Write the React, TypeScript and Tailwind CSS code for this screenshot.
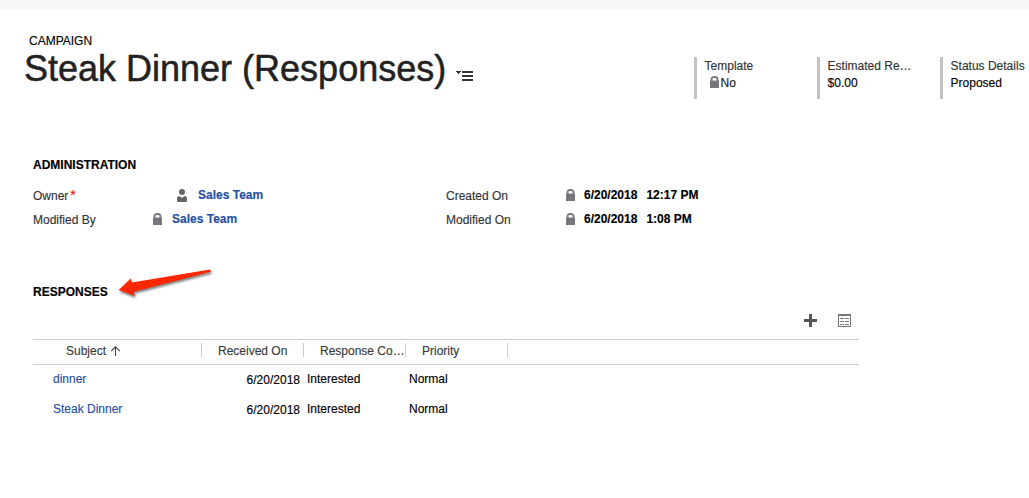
import React from 'react';

function Lock({ className = '' }: { className?: string }) {
  return (
    <svg viewBox="0 0 9 12" className={`block h-3 w-[9px] shrink-0 ${className}`}>
      <path d="M1.6 5.5V3C1.6 1.6 2.4 1 4.5 1s2.9.6 2.9 2v2.5" fill="none" stroke="#77787b" strokeWidth="1.9" />
      <rect y="4.6" width="9" height="7.4" fill="#77787b" />
    </svg>
  );
}

function Person() {
  return (
    <svg viewBox="0 0 10 13" className="mt-px block h-[13px] w-[10px] shrink-0" fill="#666">
      <circle cx="5" cy="3" r="3" />
      <path d="M0 11.5V9.5C0 8 1 7.2 2.4 7L5 8.8 7.6 7C9 7.2 10 8 10 9.5v2C10 12.5 9.3 13 8.4 13H1.6C.7 13 0 12.5 0 11.5Z" />
    </svg>
  );
}

function HeaderField({ label, children }: { label: string; children: React.ReactNode }) {
  return (
    <div className="h-[42px] w-[123px] shrink-0 border-l-[3px] border-[#c3c3c3] pl-[7.6px] pt-[2px]">
      <div className="whitespace-nowrap text-[#333] leading-[14px]">{label}</div>
      <div className="mt-[3px] flex leading-[14px]">{children}</div>
    </div>
  );
}

function HeadCell({ children, className }: { children: React.ReactNode; className: string }) {
  return (
    <div className={`flex h-[14px] shrink-0 whitespace-nowrap border-r border-[#ccc] leading-[16px] text-[#3a3a3a] ${className}`}>
      {children}
    </div>
  );
}

const rows = ['dinner', 'Steak Dinner'];

export default function App() {
  return (
    <div className="h-[498px] w-[1029px] overflow-hidden bg-white text-[12px] leading-[14px] text-black [-webkit-text-stroke-width:0.15px] [font-family:'Liberation_Sans',Arial,sans-serif]">
      <div className="h-[9px] bg-[#f6f6f6]" />
      <header className="flex h-[149px]">
        <div className="w-[694px] shrink-0 pt-[25px]">
          <div className="pl-[29px]">CAMPAIGN</div>
          <div className="flex pl-6">
            <h1 className="whitespace-nowrap text-[36px] leading-[42px] text-[#222] [-webkit-text-stroke-width:0.5px]">Steak Dinner (Responses)</h1>
            <svg viewBox="0 0 17 10" className="ml-[10px] mt-[23px] block h-[10px] w-[17px]" fill="#333" shapeRendering="crispEdges">
              <path d="M0 0h5v1H4v1H3v1H2V2H1V1H0Z" />
              <path d="M6 0h11v2H6zM6 4h11v2H6zM6 8h11v2H6z" />
            </svg>
          </div>
        </div>
        <div className="flex pt-12">
          <HeaderField label="Template">
            <Lock className="ml-[5.4px] mr-[1.6px]" />
            <span className="text-[#222]">No</span>
          </HeaderField>
          <HeaderField label="Estimated Re…">$0.00</HeaderField>
          <HeaderField label="Status Details">Proposed</HeaderField>
        </div>
      </header>

      <section className="h-[127px] pl-[33px]">
        <h2 className="font-bold">ADMINISTRATION</h2>
        <div className="mt-4 flex h-6">
          <div className="w-[144px] pt-px text-[#333]">
            Owner<span className="ml-[2px] text-[14px] leading-[12px] text-[#e02020]">*</span>
          </div>
          <div className="flex w-[269px] font-bold text-[#1f50a5]">
            <Person />
            <span className="ml-[11px]">Sales Team</span>
          </div>
          <div className="w-[120px] pt-px text-[#333]">Created On</div>
          <Lock className="mt-px" />
          <span className="ml-[9px] font-bold">6/20/2018</span>
          <span className="ml-[9px] font-bold">12:17 PM</span>
        </div>
        <div className="flex h-6">
          <div className="w-[120px] pt-px text-[#333]">Modified By</div>
          <div className="flex w-[293px] font-bold text-[#1f50a5]">
            <Lock className="mt-px" />
            <span className="ml-[10px]">Sales Team</span>
          </div>
          <div className="w-[120px] pt-px text-[#333]">Modified On</div>
          <Lock className="mt-px" />
          <span className="ml-[9px] font-bold">6/20/2018</span>
          <span className="ml-[9px] font-bold">1:08 PM</span>
        </div>
      </section>

      <section className="pl-[33px]">
        <div className="relative h-[29px]">
          <h2 className="font-bold">RESPONSES</h2>
          <svg viewBox="0 0 100 34" className="absolute left-[83px] top-[-18px] h-[34px] w-[100px] overflow-visible drop-shadow-[1px_2px_1px_rgba(0,0,0,0.5)]">
            <path d="M2.7 23 14.7 11.5 15.8 15.5 94 2.6 95 4.8 17.5 24.8 18.7 29Z" fill="#ff2600" />
          </svg>
        </div>
        <div className="flex h-[25px] w-[826px] justify-end pr-2">
          <svg viewBox="0 0 13 13" className="mr-[21px] block h-[13px] w-[13px]" fill="#555" shapeRendering="crispEdges">
            <path d="M5 0h3v5h5v3H8v5H5V8H0V5h5Z" />
          </svg>
          <svg viewBox="0 0 13 13" className="block h-[13px] w-[13px]" fill="#777" shapeRendering="crispEdges">
            <path d="M0 0h13v13H0ZM1 2v10h11V2Z" fillRule="evenodd" />
            <path d="M2 4h4v1H2zM7 4h4v1H7zM2 7h4v1H2zM7 7h4v1H7zM2 10h4v1H2zM7 10h4v1H7z" />
          </svg>
        </div>
        <div className="flex h-[26px] w-[826px] border-y border-[#ccc] pt-[3px]">
          <HeadCell className="w-[169px] pl-[33px]">
            Subject
            <svg viewBox="0 0 10 10" className="ml-[5px] mt-[3px] block h-[10px] w-[10px]" fill="none" stroke="#444" strokeWidth="1.1">
              <path d="M4.5 10V1M.3 5.1 4.5.8l4.3 4.3" />
            </svg>
          </HeadCell>
          <HeadCell className="w-[102px] pl-4">Received On</HeadCell>
          <HeadCell className="w-[102px] pl-4">Response Co…</HeadCell>
          <HeadCell className="w-[102px] pl-4">Priority</HeadCell>
        </div>
        {rows.map((name) => (
          <div key={name} className="flex h-[30px] pt-[7px]">
            <div className="w-[169px] pl-5 text-[#1f50a5]">{name}</div>
            <div className="w-[98px] pt-px text-right">6/20/2018</div>
            <div className="w-[109px] pl-[7px]">Interested</div>
            <div>Normal</div>
          </div>
        ))}
      </section>
    </div>
  );
}
